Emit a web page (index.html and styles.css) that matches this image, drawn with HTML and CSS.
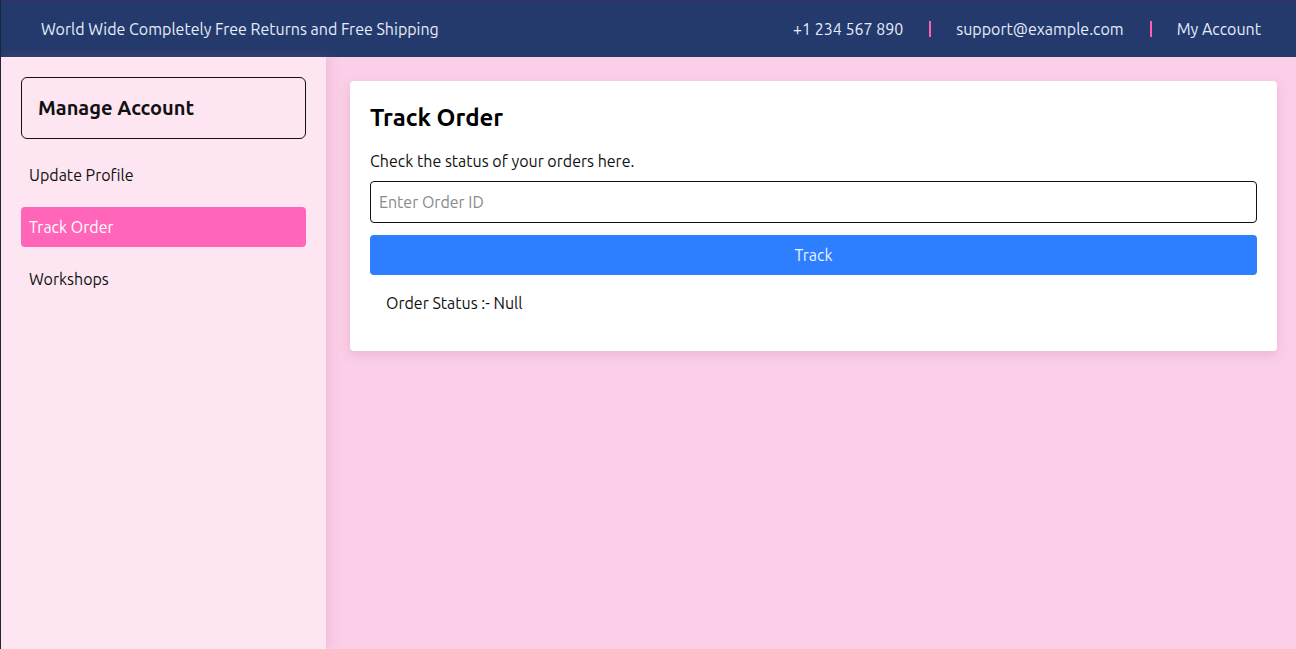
FILE: index.html
```html
<!DOCTYPE html>
<html>
<head>
<meta charset="utf-8">
<link rel="stylesheet" href="styles.css">
</head>
<body>
<div class="page">
  <header class="topbar">
    <div class="promo">World Wide Completely Free Returns and Free Shipping</div>
    <div class="contacts">
      <span>+1 234 567 890</span>
      <span class="sep"></span>
      <span>support@example.com</span>
      <span class="sep"></span>
      <span>My Account</span>
    </div>
  </header>
  <div class="body">
    <aside class="sidebar">
      <div class="manage">Manage Account</div>
      <nav class="menu">
        <a class="item">Update Profile</a>
        <a class="item active">Track Order</a>
        <a class="item">Workshops</a>
      </nav>
    </aside>
    <main class="main">
      <section class="card">
        <h1 class="title">Track Order</h1>
        <p class="desc">Check the status of your orders here.</p>
        <input class="order-input" type="text" placeholder="Enter Order ID">
        <button class="track-btn">Track</button>
        <p class="status">Order Status :- Null</p>
      </section>
    </main>
  </div>
</div>
</body>
</html>
```
FILE: styles.css
```css
* { box-sizing: border-box; }
html, body { margin: 0; padding: 0; height: 100%; }
body {
  font-family: Ubuntu, "Open Sans", "Liberation Sans", sans-serif;
  font-size: 16px;
  color: #111;
  overflow: hidden;
}
.page {
  height: 649px;
  display: flex;
  flex-direction: column;
  border-left: 1px solid #1b2433;
}
.topbar {
  height: 57px;
  flex: none;
  background: #243a6c;
  border-top: 1px solid #3c2b6e;
  color: #e6ecfb;
  display: flex;
  align-items: center;
  justify-content: space-between;
  padding: 0 35px 0 40px;
}
.contacts { display: flex; align-items: center; }
.sep {
  width: 2px;
  height: 16px;
  background: #ff5fb0;
  margin: 0 25px 0 26px;
}
.body { flex: 1; display: flex; min-height: 0; }
.sidebar {
  width: 325px;
  flex: none;
  background: #fde6f2;
  padding: 20px 20px;
  box-shadow: 4px 0 10px rgba(200, 100, 160, 0.18);
  position: relative;
  z-index: 1;
}
.manage {
  height: 62px;
  border: 1px solid #111;
  border-radius: 6px;
  display: flex;
  align-items: center;
  padding: 0 0 2px 16px;
  font-size: 20px;
  font-weight: 700;
}
.menu { display: flex; flex-direction: column; gap: 12px; margin-top: 16px; }
.item {
  height: 40px;
  display: flex;
  align-items: center;
  padding-left: 8px;
  border-radius: 4px;
  color: #111;
}
.item.active { background: #ff66b9; color: #fff; }
.main {
  flex: 1;
  background: #fbcfe8;
  padding: 24px 19px 24px 24px;
}
.card {
  background: #fff;
  border-radius: 4px;
  padding: 20px 20px 36px;
  box-shadow: 0 4px 12px rgba(180, 80, 140, 0.2);
}
.title { margin: 1px 0 0; font-size: 24px; font-weight: 700; line-height: 32px; color: #000; }
.desc { margin: 15px 0 8px; line-height: 24px; }
.order-input {
  display: block;
  width: 100%;
  height: 42px;
  border: 1px solid #111;
  border-radius: 4px;
  padding: 0 8px;
  font: inherit;
  outline: none;
}
.order-input::placeholder { color: #8a8a8a; }
.track-btn {
  display: block;
  width: 100%;
  height: 40px;
  margin-top: 12px;
  border: none;
  border-radius: 4px;
  background: #2e7fff;
  color: #eaf2ff;
  font: inherit;
}
.status { margin: 16px 0 0 16px; line-height: 24px; }
```
